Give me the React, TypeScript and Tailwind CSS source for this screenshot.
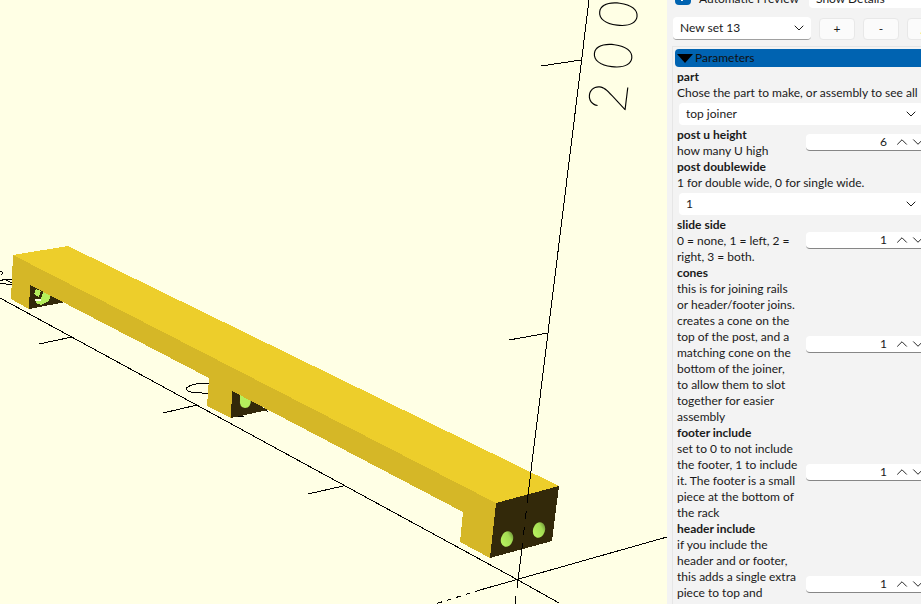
import { ChevronDown, ChevronUp } from "lucide-react";

type Parameter = {
  id: string;
  title: string;
  lines: string[];
  value: string;
  kind: "spin" | "select";
  clipped?: boolean;
};

const parameters: Parameter[] = [
  { id: "part", title: "part", lines: ["Chose the part to make, or assembly to see all"], value: "top joiner", kind: "select" },
  { id: "post-u-height", title: "post u height", lines: ["how many U high"], value: "6", kind: "spin" },
  { id: "post-doublewide", title: "post doublewide", lines: ["1 for double wide, 0 for single wide."], value: "1", kind: "select" },
  { id: "slide-side", title: "slide side", lines: ["0 = none, 1 = left, 2 =", "right, 3 = both."], value: "1", kind: "spin" },
  {
    id: "cones",
    title: "cones",
    lines: [
      "this is for joining rails",
      "or header/footer joins.",
      "creates a cone on the",
      "top of the post, and a",
      "matching cone on the",
      "bottom of the joiner,",
      "to allow them to slot",
      "together for easier",
      "assembly",
    ],
    value: "1",
    kind: "spin",
  },
  {
    id: "footer-include",
    title: "footer include",
    lines: ["set to 0 to not include", "the footer, 1 to include", "it. The footer is a small", "piece at the bottom of", "the rack"],
    value: "1",
    kind: "spin",
  },
  {
    id: "header-include",
    title: "header include",
    lines: ["if you include the", "header and or footer,", "this adds a single extra", "piece to top and"],
    value: "1",
    kind: "spin",
    clipped: true,
  },
];

function Viewport() {
  return (
    <svg className="block h-[604px] w-[667px]" viewBox="0 0 667 604" role="img" aria-label="3D preview of the top joiner">
      <defs>
        <linearGradient id="bore" x1="1" y1="0" x2="0.3" y2="1">
          <stop offset="0" stopColor="#55702b" />
          <stop offset="0.4" stopColor="#a4dc53" />
          <stop offset="1" stopColor="#b9f35f" />
        </linearGradient>
      </defs>
      <g fill="none" stroke="#000" shapeRendering="crispEdges">
        <path d="M0 298 518 580 559 603" />
        <path d="M667 537 480 590" />
        <path d="M480 590 435 604" strokeDasharray="5 5" />
        <path d="M39 344 72 337M163 413 197 405M308 494 343 486M541 66 581 60M509 340 548 333" />
        <path d="M232 383H202Q187 385 186 389 188 393 202 393H232M207 399V401M233 416.500H244M264 409.500 268 411.500" />
        <path d="M0 271Q5 272 1 275M0 281 5 279H12M0 283 12 285M4 279 12 283" />
      </g>
      <g shapeRendering="crispEdges">
        <path fill="#33290a" d="M30 284 66 302 29 309ZM232 390 268 410 231 418ZM496 503 559 486 552 541 490 558Z" />
        <path fill="#b5ef5c" d="M36 289 41 291 39 297 34 294ZM44 290 51 294 49 301 41 305 36 303 36 301 41 299Z" />
        <path fill="#ffffe5" d="M35 299H41V301H35Z" />
        <path fill="#edce2b" d="M13 255 68 246 559 486 496 503Z" />
      </g>
      <path fill="#b5ef5c" d="M240 393 251 399Q251 408 245 408 239 407 240 400Z" />
      <path
        fill="#d5b727"
        shapeRendering="crispEdges"
        d="M13 255 496 503 490 558 460 542 463 512 232 391 231 418 207 406 209 378 30 285 29 309 11 299Z"
      />
      <ellipse cx="507" cy="539" rx="6" ry="8" transform="rotate(18 507 539)" fill="url(#bore)" />
      <ellipse cx="539" cy="530" rx="6" ry="8" transform="rotate(18 539 530)" fill="url(#bore)" />
      <g fill="none" stroke="#000" shapeRendering="crispEdges">
        <path d="M589 0 528 495M522 548 518 580" />
        <path d="M528 495 522 548M518 580 515 604" strokeDasharray="8 8" />
      </g>
      <text
        transform="translate(625 115) rotate(-83)"
        x="0 42 84"
        y="0"
        fill="#000"
        className="font-[Inter,Lato,sans-serif] text-[52px] font-thin"
      >
        200
      </text>
    </svg>
  );
}

function SpinBox({ id, value }: { id: string; value: string }) {
  return (
    <div className="mb-0.5 flex h-[17px] w-[124px] shrink-0 items-center rounded-sm border-b border-[#868686] bg-white">
      <input id={id} defaultValue={value} className="w-[81px] bg-transparent text-right outline-none" />
      <button type="button" aria-label="Increase" className="ml-1.5 w-4">
        <ChevronUp size={18} strokeWidth={1.25} />
      </button>
      <button type="button" aria-label="Decrease" className="w-4">
        <ChevronDown size={18} strokeWidth={1.25} />
      </button>
    </div>
  );
}

function SelectBox({ id, value, label }: { id: string; value: string; label?: string }) {
  return (
    <div className="grid h-full items-center rounded bg-white">
      <select id={id} aria-label={label} className="col-start-1 row-start-1 h-full w-full appearance-none bg-transparent pl-[7px] outline-none">
        <option>{value}</option>
      </select>
      <ChevronDown size={16} strokeWidth={1.5} className="pointer-events-none col-start-1 row-start-1 mr-1 justify-self-end" />
    </div>
  );
}

function ParameterRow({ p }: { p: Parameter }) {
  const text = (
    <label htmlFor={p.id} className="block whitespace-nowrap">
      <span className="block font-bold">{p.title}</span>
      {p.lines.map((line) => (
        <span key={line} className="block">
          {line}
        </span>
      ))}
    </label>
  );
  if (p.kind === "select") {
    return (
      <div>
        {text}
        <div className="mt-0.5 -mr-0.5 mb-0.5 ml-0.5 h-[22px]">
          <SelectBox id={p.id} value={p.value} />
        </div>
      </div>
    );
  }
  return (
    <div className={p.clipped ? "flex h-32 items-center" : "flex items-center"}>
      <div className="w-[129px] shrink-0 self-start">{text}</div>
      <SpinBox id={p.id} value={p.value} />
    </div>
  );
}

const toolButton = "flex h-[22px] w-9 shrink-0 items-center justify-center rounded border border-[#e8e8e8] bg-[#fbfbfb]";

export default function App() {
  return (
    <div className="flex h-screen overflow-hidden bg-[#ffffe5] font-[Lato,'Open_Sans',sans-serif] text-[12px] leading-4 text-[#1a1a1a]">
      <main className="min-w-0 flex-1 overflow-hidden">
        <Viewport />
      </main>
      <aside className="w-[254px] shrink-0 overflow-hidden bg-[#f3f3f3]">
        <div className="-mt-[14px] w-[276px] pl-1.5">
          <div className="flex h-[22px] items-center pl-0.5">
            <label className="flex items-center gap-2">
              <span className="grid">
                <input type="checkbox" defaultChecked className="col-start-1 row-start-1 size-4 appearance-none rounded bg-[#0063b1]" />
                <svg viewBox="0 0 16 16" className="pointer-events-none col-start-1 row-start-1 size-4">
                  <path d="M4 9 7 12 12 6" fill="none" stroke="#fff" />
                </svg>
              </span>
              <span className="w-[102px] pt-1 whitespace-nowrap">Automatic Preview</span>
            </label>
            <div className="ml-2 grid h-[22px] flex-1 items-center rounded bg-white">
              <select aria-label="Description style" className="h-[22px] w-full appearance-none bg-transparent pt-1 pl-[7px] outline-none">
                <option>Show Details</option>
              </select>
            </div>
          </div>
          <div className="mt-[9px] flex h-[23px] items-center gap-2">
            <div className="h-[23px] w-[138px] shrink-0 rounded border-b border-[#a0a0a0]">
              <SelectBox id="preset" value="New set 13" label="Preset" />
            </div>
            <button type="button" className={toolButton}>+</button>
            <button type="button" className={toolButton}>-</button>
            <button type="button" aria-label="Save preset" className={toolButton}>
              <svg viewBox="0 0 12 12" className="size-3">
                <path d="M1 11 3 7 9 1 11 3 5 9Z" fill="#f2e63c" />
              </svg>
            </button>
          </div>
          <section className="mt-1.5 -ml-px border-t border-l border-[#e6e6e6] pt-0.5 pl-0.5">
            <button type="button" className="flex h-[18px] w-full items-center gap-0.5 rounded bg-[#0063b1] pl-0.5 text-[#101010]">
              <svg viewBox="0 0 16 9" className="h-[9px] w-4">
                <path d="M0 0H16L8 9Z" fill="#000" />
              </svg>
              Parameters
            </button>
            <div className="mt-0.5 w-[246px] pl-0.5">
              {parameters.map((p) => (
                <ParameterRow key={p.id} p={p} />
              ))}
            </div>
          </section>
        </div>
      </aside>
    </div>
  );
}
